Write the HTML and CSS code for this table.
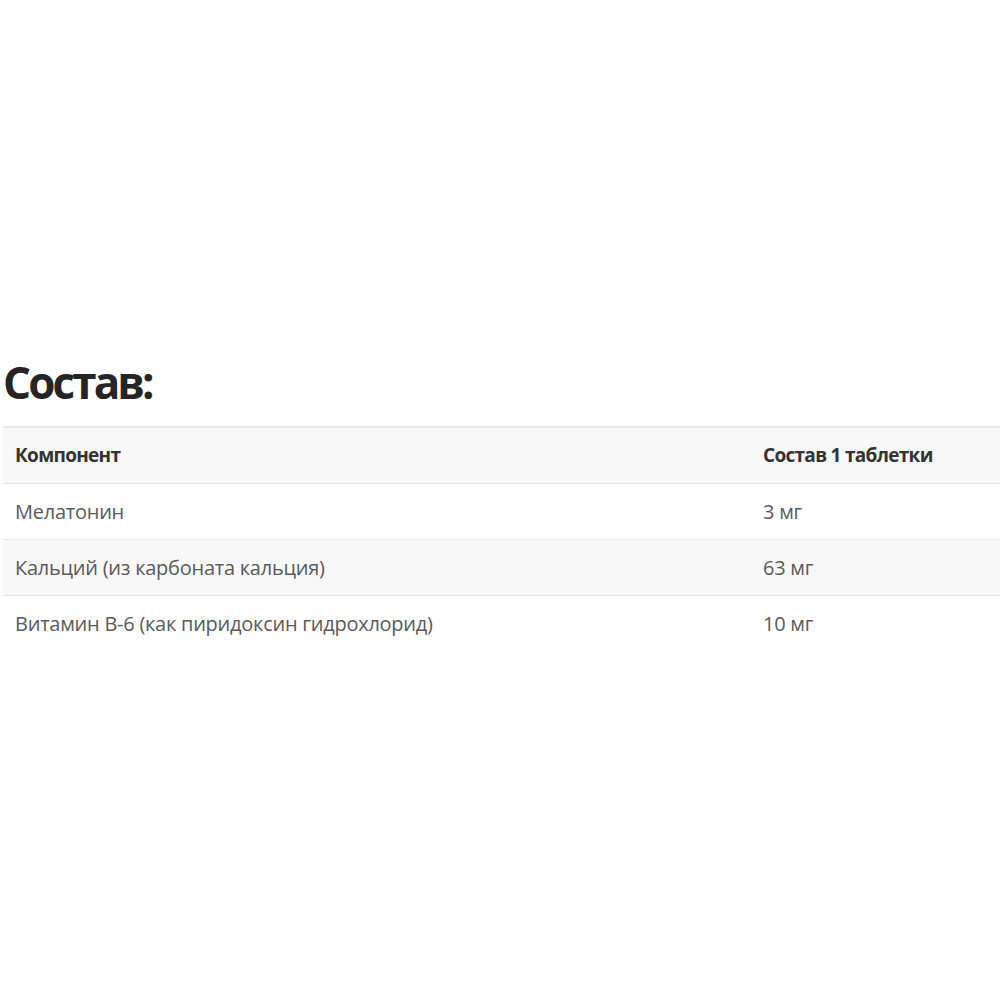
FILE: index.html
```html
<!DOCTYPE html>
<html lang="ru">
<head>
<meta charset="utf-8">
<title>Состав</title>
<link rel="stylesheet" href="styles.css">
</head>
<body>
<section class="composition">
  <h2 class="title">Состав:</h2>
  <table class="table">
    <thead>
      <tr><th class="col-name">Компонент</th><th class="col-amount">Состав 1 таблетки</th></tr>
    </thead>
    <tbody>
      <tr><td>Мелатонин</td><td>3 мг</td></tr>
      <tr class="striped"><td>Кальций (из карбоната кальция)</td><td>63 мг</td></tr>
      <tr><td>Витамин B-6 (как пиридоксин гидрохлорид)</td><td>10 мг</td></tr>
    </tbody>
  </table>
</section>
</body>
</html>
```
FILE: styles.css
```css
html, body {
  margin: 0;
  padding: 0;
  background: #ffffff;
}
body {
  font-family: "Open Sans", "Noto Sans", sans-serif;
  width: 1000px;
  height: 1000px;
  overflow: hidden;
}
.composition {
  padding: 352px 0 0 3px;
}
.title {
  margin: 0 0 14px 0;
  font-size: 44px;
  line-height: 60px;
  font-weight: 700;
  color: #252525;
  letter-spacing: -2.9px;
}
.table {
  width: 1010px;
  border-collapse: collapse;
  border-top: 2px solid #e8e8e8;
}
.table th, .table td {
  height: 56px;
  padding: 0 12px;
  text-align: left;
  vertical-align: middle;
  box-sizing: border-box;
}
.table th {
  background: #f8f8f8;
  color: #333333;
  font-size: 19px;
  font-weight: 700;
  letter-spacing: -0.7px;
  border-bottom: 1px solid #e3e3e3;
}
.table td {
  color: #5a5a5a;
  font-size: 20px;
  letter-spacing: -0.25px;
  border-bottom: 1px solid #e3e3e3;
}
.table tbody tr:last-child td {
  border-bottom: none;
}
.table .striped td {
  background: #f8f8f8;
}
.col-name {
  width: 748px;
}
```
